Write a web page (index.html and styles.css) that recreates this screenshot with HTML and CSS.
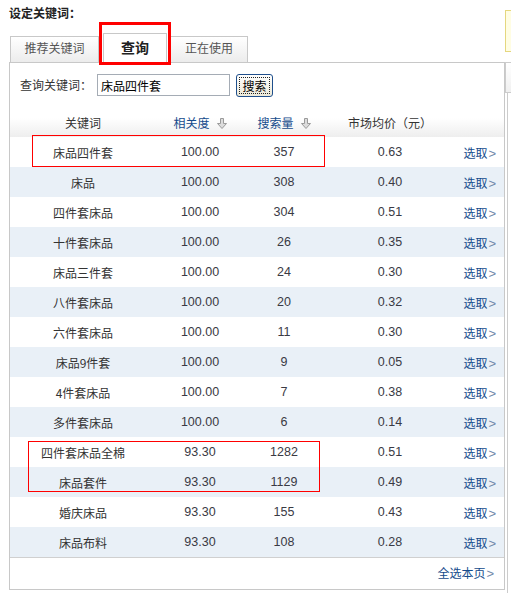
FILE: index.html
```html
<!DOCTYPE html>
<html lang="zh-CN">

<head>
    <meta charset="UTF-8">
    <meta name="viewport" content="width=device-width, initial-scale=1.0">
    <title>设定关键词</title>
    <link rel="stylesheet" href="styles.css">
</head>

<body>

    <div class="page">
        <div class="main">
            <div class="title">设定关键词：</div>

            <div class="tabs">
                <div class="tab tab-first">推荐关键词</div>
                <div class="tab tab-active">查询</div>
                <div class="tab tab-last">正在使用</div>
            </div>
            <div class="mark mark-tab"></div>

            <div class="panel">
                <form class="search">
                    <label for="kw">查询关键词：</label>
                    <input type="text" id="kw" value="床品四件套">
                    <button type="button">搜索</button>
                </form>

                <div class="table-wrap">
                    <table class="kw-table">
                        <colgroup>
                            <col class="c-kw">
                            <col class="c-rel">
                            <col class="c-vol">
                            <col class="c-price">
                            <col class="c-op">
                        </colgroup>
                        <thead>
                            <tr>
                                <th>关键词</th>
                                <th class="sort">相关度<svg class="arrow" width="10" height="11" viewBox="0 0 10 11"><path d="M3.5 0.5h3v5h3l-4.5 5l-4.5-5h3z" fill="#dcdcdc" stroke="#9a9a9a" stroke-width="1"/></svg></th>
                                <th class="sort">搜索量<svg class="arrow" width="10" height="11" viewBox="0 0 10 11"><path d="M3.5 0.5h3v5h3l-4.5 5l-4.5-5h3z" fill="#dcdcdc" stroke="#9a9a9a" stroke-width="1"/></svg></th>
                                <th>市场均价（元）</th>
                                <th></th>
                            </tr>
                        </thead>
                        <tbody id="rows"></tbody>
                    </table>
                    <div class="mark mark-row1"></div>
                    <div class="mark mark-row2"></div>
                </div>

                <div class="foot"><a href="#">全选本页<span class="gt">&gt;</span></a></div>
            </div>
        </div>

        <div class="side">
            <div class="note"></div>
            <div class="side-box"></div>
            <div class="side-line"></div>
        </div>
    </div>

    <script>
        const data = [
            ['床品四件套', '100.00', '357', '0.63'],
            ['床品', '100.00', '308', '0.40'],
            ['四件套床品', '100.00', '304', '0.51'],
            ['十件套床品', '100.00', '26', '0.35'],
            ['床品三件套', '100.00', '24', '0.30'],
            ['八件套床品', '100.00', '20', '0.32'],
            ['六件套床品', '100.00', '11', '0.30'],
            ['床品9件套', '100.00', '9', '0.05'],
            ['4件套床品', '100.00', '7', '0.38'],
            ['多件套床品', '100.00', '6', '0.14'],
            ['四件套床品全棉', '93.30', '1282', '0.51'],
            ['床品套件', '93.30', '1129', '0.49'],
            ['婚庆床品', '93.30', '155', '0.43'],
            ['床品布料', '93.30', '108', '0.28']
        ];

        const tbody = document.getElementById('rows');
        data.forEach(function (r) {
            const tr = document.createElement('tr');
            tr.innerHTML =
                '<td>' + r[0] + '</td>' +
                '<td class="num">' + r[1] + '</td>' +
                '<td class="num">' + r[2] + '</td>' +
                '<td class="num">' + r[3] + '</td>' +
                '<td class="op"><a href="#">选取<span class="gt">&gt;</span></a></td>';
            tbody.appendChild(tr);
        });
    </script>

</body>

</html>
```

FILE: styles.css
```css
* {
    margin: 0;
    padding: 0;
    box-sizing: border-box;
}

body {
    font-family: "Noto Sans CJK SC", sans-serif;
    font-size: 12px;
    color: #333;
    background-color: #fff;
}

a {
    color: #154b8c;
    text-decoration: none;
}

.page {
    display: flex;
    padding-left: 9px;
}

.main {
    position: relative;
    width: 496px;
    flex: none;
}

.title {
    height: 33px;
    line-height: 26px;
    font-weight: bold;
    color: #222;
}

/* tabs */
.tabs {
    display: flex;
    align-items: flex-end;
    height: 29px;
    padding-left: 1px;
}

.tab {
    height: 26px;
    line-height: 22px;
    text-align: center;
    color: #555;
    border: 1px solid #c8c8c8;
    border-bottom: none;
    background: linear-gradient(#ffffff, #ececec);
}

.tab-first {
    width: 89px;
    margin-right: 4px;
}

.tab-active {
    position: relative;
    z-index: 1;
    width: 64px;
    height: 30px;
    margin-right: 3px;
    margin-bottom: -1px;
    line-height: 26px;
    font-size: 14px;
    font-weight: bold;
    color: #222;
    background: #fff;
}

.tab-last {
    width: 78px;
}

/* red marks */
.mark {
    position: absolute;
    border: 1px solid #f00;
    pointer-events: none;
}

.mark-tab {
    left: 90px;
    top: 22px;
    width: 72px;
    height: 43px;
    border-width: 3px;
    z-index: 2;
}

.mark-row1 {
    left: 22px;
    top: 25px;
    width: 293px;
    height: 32px;
}

.mark-row2 {
    left: 18px;
    top: 331px;
    width: 292px;
    height: 51px;
}

/* panel */
.panel {
    border: 1px solid #c8c8c8;
}

.search {
    display: flex;
    align-items: flex-start;
    height: 34px;
    padding: 11px 0 0 10px;
}

.search label {
    width: 77px;
    line-height: 22px;
    color: #333;
}

.search input {
    width: 133px;
    height: 22px;
    padding-left: 3px;
    border: 1px solid #a5acb5;
    font-family: "Noto Sans CJK SC", sans-serif;
    font-size: 12px;
    color: #000;
}

.search button {
    width: 37px;
    height: 23px;
    margin-left: 6px;
    border: 1px solid #1f4f8c;
    border-radius: 3px;
    background: linear-gradient(#ffffff, #ece9d8);
    outline: 1px dotted #222;
    outline-offset: -4px;
    font-family: "Noto Sans CJK SC", sans-serif;
    font-size: 12px;
    color: #000;
}

.table-wrap {
    position: relative;
    margin-top: 13px;
}

.kw-table {
    width: 100%;
    border-collapse: collapse;
    table-layout: fixed;
}

.c-kw { width: 146px; }
.c-rel { width: 88px; }
.c-vol { width: 80px; }
.c-price { width: 132px; }

.kw-table th {
    height: 27px;
    padding-bottom: 2px;
    font-weight: normal;
    color: #333;
    background: linear-gradient(#ffffff 30%, #eeeeee);
}

.kw-table th.sort {
    color: #154b8c;
}

.arrow {
    margin-left: 7px;
    vertical-align: -1px;
}

.kw-table td {
    height: 30px;
    text-align: center;
}

.kw-table tbody tr:nth-child(even) td {
    background-color: #e9f0f7;
}

.num {
    font-family: "Liberation Sans", Arial, sans-serif;
    font-size: 12.5px;
    color: #3a3a44;
}

.kw-table td.op {
    text-align: right;
    padding-right: 8px;
}

.gt {
    margin-left: 1px;
    font-family: "Liberation Sans", Arial, sans-serif;
    font-size: 13px;
    color: #7088aa;
}

.foot {
    height: 32px;
    border-top: 1px solid #d0d0d0;
    padding-right: 10px;
    line-height: 30px;
    text-align: right;
}

/* right side */
.side {
    flex: 1;
    overflow: hidden;
}

.note {
    height: 42px;
    margin-top: 10px;
    border: 1px solid #e5d77f;
    border-right: none;
    background-color: #fffde3;
}

.side-box {
    height: 31px;
    margin-top: 10px;
    border: 1px solid #cccccc;
    border-right: none;
    background: linear-gradient(#ffffff, #f0f0f0);
}

.side-line {
    height: 500px;
    margin-left: 2px;
    border-left: 1px solid #cccccc;
}
```
